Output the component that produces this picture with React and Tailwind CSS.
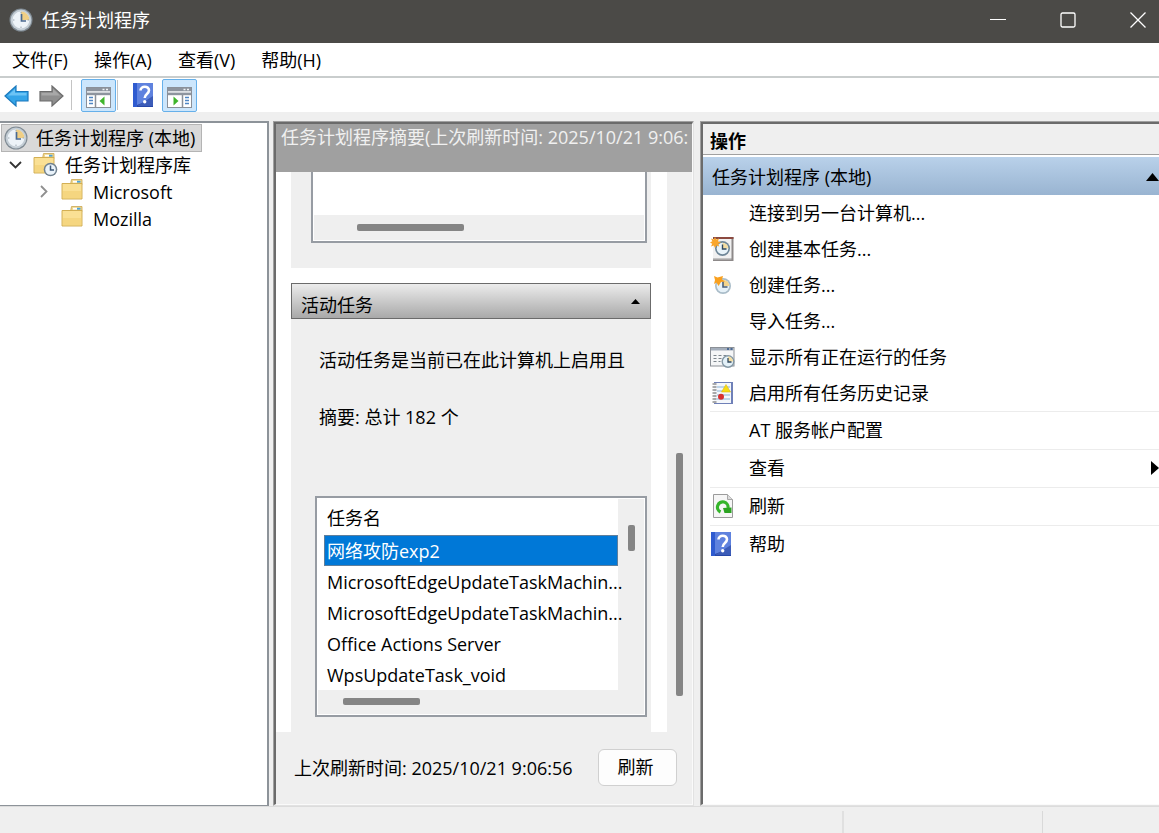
import React, { useState } from "react";

const ClockFace = ({ className }) => (
  <svg viewBox="0 0 24 24" className={className} aria-hidden="true">
    <circle cx="12" cy="12" r="11.500" fill="#7f8a93" />
    <circle cx="12" cy="12" r="10.400" fill="#c3cdd5" />
    <circle cx="12" cy="12" r="8.400" fill="#edf3f8" />
    <path d="M12 12V3.600A8.400 8.400 0 0 1 20.400 12Z" fill="#f0cf85" />
    <path
      d="M12 4v1.400M12 18.600v1.400M4 12h1.400M18.600 12h1.400"
      stroke="#9aa6b0"
      strokeWidth="1"
    />
    <path d="M12.500 6v7H17" fill="none" stroke="#4b6a90" strokeWidth="1.700" />
  </svg>
);

const FolderShape = () => (
  <>
    <path d="M2 4.500h9l1.500-3.500h8.500v19H2z" fill="#e3bd5c" />
    <path d="M10.500.5h10.500v5H9.500z" fill="#f0d88e" stroke="#c9a650" strokeWidth=".8" />
    <path d="M12 2.700h4" stroke="#fff" strokeWidth="1.800" />
    <path d="M16 2.700h3.500" stroke="#4aa3dd" strokeWidth="1.800" />
    <path d="M1 4.500h20V20H1z" fill="#fae094" stroke="#cfa94c" strokeWidth=".9" />
    <path d="M1.800 12h18.700v7.400H1.800z" fill="#f0cb6c" opacity=".5" />
  </>
);

const FolderIcon = ({ className }) => (
  <svg viewBox="0 0 22 21" className={className} aria-hidden="true">
    <FolderShape />
  </svg>
);

const FolderClockIcon = ({ className }) => (
  <svg viewBox="0 0 25 24" className={className} aria-hidden="true">
    <FolderShape />
    <circle cx="17.500" cy="16.500" r="6.800" fill="#71828f" />
    <circle cx="17.500" cy="16.500" r="5.300" fill="#eaf3fa" />
    <path d="M17.500 12.500v4.500h3.500" fill="none" stroke="#3e5a78" strokeWidth="1.500" />
  </svg>
);

const ArrowIcon = ({ back }) => (
  <svg viewBox="0 0 25 22" className="h-[22px] w-[25px]" aria-hidden="true">
    <path
      d={
        back
          ? "M1 11 12 1v5.500h12v9.500H12V21z"
          : "M24 11 13 1v5.500H1v9.500h12V21z"
      }
      fill={back ? "#35a5e8" : "#8f8f8f"}
      stroke={back ? "#1b79bd" : "#6c6c6c"}
      strokeWidth="1.200"
    />
    <path
      d={back ? "M4 10.500 11 4v4h11.500v2.500z" : "M21 10.500 14 4v4H2.500v2.500z"}
      fill={back ? "#6cc4f5" : "#a8a8a8"}
    />
  </svg>
);

const PaneIcon = ({ flip }) => (
  <svg viewBox="0 0 25 21" className="h-[21px] w-[25px]" aria-hidden="true">
    <rect x=".5" y=".5" width="24" height="20" fill="#fff" stroke="#8a9099" />
    <path d="M1 1h23v3H1z" fill="#8d949e" />
    <path d="M16.500 2.500h2M20 2.500h2" stroke="#eef1f4" strokeWidth="1.500" />
    <path d="M1 5h23" stroke="#dde0e4" strokeWidth="2" />
    <path d="M1 7h23" stroke="#8d949e" strokeWidth="2.400" />
    {flip ? (
      <>
        <path d="M15.500 8v12" stroke="#8a9099" strokeWidth="1.500" />
        <path d="M18 10.500h4M18 13.500h4M18 16.500h4" stroke="#4f86c4" strokeWidth="1.600" />
        <path d="M6.500 9.500 11.500 14l-5 4.500z" fill="#3fb52c" />
      </>
    ) : (
      <>
        <path d="M9.500 8v12" stroke="#8a9099" strokeWidth="1.500" />
        <path d="M3 10.500h4M3 13.500h4M3 16.500h4" stroke="#4f86c4" strokeWidth="1.600" />
        <path d="M18.500 9.500 13.500 14l5 4.500z" fill="#3fb52c" />
      </>
    )}
  </svg>
);

const HelpIcon = ({ className }) => (
  <svg viewBox="0 0 20 24" className={className} aria-hidden="true">
    <rect width="20" height="24" fill="#2747a8" />
    <path d="M4 0h16v16L4 22z" fill="#5f82de" />
    <path d="M0 0h4v24H0z" fill="#2f5bd0" />
    <path d="M4 23h16V13z" fill="#3c5cb8" />
    <path
      d="M7.500 7.500c0-5 8.500-5 8.500-.2 0 3.700-4.300 3.700-4.300 7.700"
      fill="none"
      stroke="#fff"
      strokeWidth="2.600"
    />
    <circle cx="11.700" cy="18.800" r="1.700" fill="#fff" />
  </svg>
);

const Spark = () => (
  <path
    d="m5 0 1.200 2.600L9 1.500 8 4.300 11 5.500 8.200 6.700 9.200 9.500 6.300 8.500 5 11 3.800 8.500 1 9.500l1.200-2.800L0 5.500l2.300-1.200L1 1.500l2.800 1z"
    fill="#f9a62c"
  />
);

const BasicTaskIcon = () => (
  <svg viewBox="0 0 24 24" className="h-6 w-6" aria-hidden="true">
    <path d="M3 0h20.500v24H3z" fill="#8d8989" />
    <path d="M3 0h20.500v2H3z" fill="#8c4a40" />
    <path d="M3 2h18.500v19H3z" fill="#f1f1f1" />
    <path d="M3 21h18.500v1.500H3z" fill="#c4c4c4" />
    <circle cx="12.500" cy="11.500" r="7.500" fill="#6f8798" />
    <circle cx="12.500" cy="11.500" r="5.800" fill="#e9f4fa" />
    <path d="M12.500 11.500V5.700a5.800 5.800 0 0 1 5.800 5.800z" fill="#f3dda2" />
    <path d="M12.500 7.500v4.500h4" fill="none" stroke="#30485e" strokeWidth="1.400" />
    <Spark />
  </svg>
);

const TaskIcon = () => (
  <svg viewBox="0 0 24 24" className="h-6 w-6" aria-hidden="true">
    <circle cx="13" cy="13" r="8" fill="#a9bcc8" />
    <circle cx="13" cy="13" r="6.300" fill="#e6f1f8" />
    <path d="M13 13V6.700a6.300 6.300 0 0 1 6.300 6.300z" fill="#f3d48c" />
    <path d="M13 8.500V14h4.500" fill="none" stroke="#4b5f78" strokeWidth="1.600" />
    <path
      d="m4 3 3.500 1.500L13 3l-1 3.500 3 2-4 .5-2.500 4-2-3.500L4 11l1-4z"
      fill="#f9a01e"
    />
  </svg>
);

const RunningIcon = () => (
  <svg viewBox="0 0 25 24" className="h-6 w-[25px]" aria-hidden="true">
    <rect x=".5" y="2.500" width="23.500" height="18.500" fill="#f5f6f7" stroke="#8b9096" />
    <path d="M1 3h22.500v2.500H1z" fill="#a4aebb" />
    <path d="M17 4h2M20.500 4h2" stroke="#2f5488" strokeWidth="1.500" />
    <path
      d="M3.500 10.500h3M8.500 10.500h3M13.500 10.500h3M3.500 13.500h3M8.500 13.500h3M3.500 16.500h3M8.500 16.500h2"
      stroke="#7d858c"
      strokeWidth="1.200"
    />
    <circle cx="18" cy="16.500" r="6.500" fill="#8397a4" />
    <circle cx="18" cy="16.500" r="5.100" fill="#e4f1f8" />
    <path d="M18 16.500v-5.100a5.100 5.100 0 0 1 5.100 5.100z" fill="#f3dda2" />
    <path d="M18 13v4h3.500" fill="none" stroke="#30485e" strokeWidth="1.300" />
  </svg>
);

const HistoryIcon = () => (
  <svg viewBox="0 0 24 24" className="h-6 w-6" aria-hidden="true">
    <path d="M4 1h19v22H4z" fill="#6f80b8" />
    <path d="M4 2h17v20H4z" fill="#f4f7fb" />
    <path d="M7 6h13M7 10h13M7 14h13M7 18h13" stroke="#86b3da" strokeWidth="1.200" />
    <path
      d="M2.500 3h4M2.500 6h4M2.500 9h4M2.500 12h4M2.500 15h4M2.500 18h4M2.500 21h4"
      stroke="#5a5a5a"
      strokeWidth="1.200"
    />
    <path d="m16 3.500 4.500 7.500h-9z" fill="#f7dc16" stroke="#dfb90f" strokeWidth=".6" />
    <circle cx="11" cy="15.800" r="3" fill="#d82f2f" />
  </svg>
);

const RefreshIcon = () => (
  <svg viewBox="0 0 24 24" className="h-6 w-6" aria-hidden="true">
    <path d="M3.500.5h14l5 5v18h-19z" fill="#f6f6f6" stroke="#9b9b9b" />
    <path d="M17.500.5v5h5" fill="#dcdcdc" stroke="#a8a8a8" />
    <path
      d="M10.500 18A5.300 5.300 0 1 1 18 14"
      fill="none"
      stroke="#35b52b"
      strokeWidth="3.200"
    />
    <path d="M13 14l8.500-.5V19H14.500z" fill="#2ca322" />
  </svg>
);

const primaryActions = [
  { label: "连接到另一台计算机..." },
  { label: "创建基本任务...", icon: <BasicTaskIcon /> },
  { label: "创建任务...", icon: <TaskIcon /> },
  { label: "导入任务..." },
  { label: "显示所有正在运行的任务", icon: <RunningIcon /> },
  { label: "启用所有任务历史记录", icon: <HistoryIcon /> },
];

const secondaryActions = [
  { label: "AT 服务帐户配置" },
  { label: "查看", submenu: true },
  { label: "刷新", icon: <RefreshIcon /> },
  { label: "帮助", icon: <HelpIcon className="ml-px h-6 w-5" /> },
];

const tasks = [
  "网络攻防exp2",
  "MicrosoftEdgeUpdateTaskMachin...",
  "MicrosoftEdgeUpdateTaskMachin...",
  "Office Actions Server",
  "WpsUpdateTask_void",
];

const TitleBar = () => (
  <header className="flex h-[43px] shrink-0 items-center bg-[#4b4a47] pb-1 pl-[9px] text-white">
    <ClockFace className="h-6 w-6" />
    <h1 className="ml-[9px] flex-1">任务计划程序</h1>
    <div className="flex gap-[38px] pr-[5px]">
      <button aria-label="最小化" className="flex h-8 w-8 items-center justify-center">
        <svg viewBox="0 0 16 16" className="h-4 w-4">
          <path d="M0 7.500h16" stroke="#fff" />
        </svg>
      </button>
      <button aria-label="最大化" className="flex h-8 w-8 items-center justify-center">
        <svg viewBox="0 0 16 16" className="h-4 w-4">
          <rect x="1" y="1" width="14" height="14" rx="1.500" fill="none" stroke="#fff" strokeWidth="1.300" />
        </svg>
      </button>
      <button aria-label="关闭" className="flex h-8 w-8 items-center justify-center">
        <svg viewBox="0 0 16 16" className="h-4 w-4">
          <path d="m.5.5 15 15m0-15-15 15" stroke="#fff" strokeWidth="1.300" />
        </svg>
      </button>
    </div>
  </header>
);

const Toolbar = () => (
  <div className="flex h-[34px] shrink-0 items-center bg-white pl-1">
    <button aria-label="后退" className="pt-[2px]">
      <ArrowIcon back />
    </button>
    <button aria-label="前进" className="ml-[10px] pt-[2px]">
      <ArrowIcon />
    </button>
    <span className="ml-[7px] h-[30px] w-px bg-[#c4c4c4]" />
    <button
      aria-label="显示/隐藏控制台树"
      className="ml-[9px] flex h-[33px] w-[35px] items-center justify-center rounded-xs border border-[#66b0ea] bg-[#cce6fc] pt-1"
    >
      <PaneIcon />
    </button>
    <span className="ml-px h-[30px] w-px bg-[#c4c4c4]" />
    <button aria-label="帮助" className="ml-[15px]">
      <HelpIcon className="h-6 w-5" />
    </button>
    <button
      aria-label="显示/隐藏操作窗格"
      className="ml-[9px] flex h-[33px] w-[35px] items-center justify-center rounded-xs border border-[#66b0ea] bg-[#cce6fc] pt-1"
    >
      <PaneIcon flip />
    </button>
  </div>
);

const ConsoleTree = () => (
  <nav className="w-[269px] shrink-0 border-t-2 border-r-2 border-b border-[#8d9399] bg-white">
    <button className="mt-px ml-px flex h-7 items-center border border-[#b4b4b4] bg-[#d9d9d9] pr-1.5 pl-[2px]">
      <ClockFace className="h-6 w-6" />
      <span className="ml-2">任务计划程序 (本地)</span>
    </button>
    <div className="flex h-[26px] items-center pl-[9px]">
      <button aria-label="折叠">
        <svg viewBox="0 0 13 8" className="h-2 w-[13px]">
          <path d="m1 1 5.500 5.500L12 1" fill="none" stroke="#333" strokeWidth="1.800" />
        </svg>
      </button>
      <button className="ml-[11px] flex items-center">
        <FolderClockIcon className="h-6 w-[25px]" />
        <span className="ml-[7px]">任务计划程序库</span>
      </button>
    </div>
    <div className="flex h-[27px] items-center pl-10">
      <button aria-label="展开" className="w-[21px]">
        <svg viewBox="0 0 8 13" className="h-[13px] w-2">
          <path d="M1 1l5.500 5.500L1 12" fill="none" stroke="#8f8f8f" strokeWidth="1.800" />
        </svg>
      </button>
      <button className="flex items-center">
        <FolderIcon className="mb-1 h-[21px] w-[22px]" />
        <span className="ml-[10px]">Microsoft</span>
      </button>
    </div>
    <button className="flex h-[27px] items-center pl-[61px]">
      <FolderIcon className="mb-1 h-[21px] w-[22px]" />
      <span className="ml-[10px]">Mozilla</span>
    </button>
  </nav>
);

const TaskTable = ({ selected, onSelect }) => (
  <div className="mr-1 ml-6 border-2 border-[#979ca3] bg-white p-px">
    <div className="flex">
      <div className="relative z-10 min-w-0 flex-1 pl-1.5">
        <table className="w-full table-fixed border-collapse text-left">
          <thead>
            <tr className="h-9">
              <th className="pt-[2px] pl-[3px] font-normal">任务名</th>
            </tr>
          </thead>
          <tbody>
            {tasks.map((task, index) => (
              <tr
                key={index}
                onClick={() => onSelect(index)}
                className={`h-[31px] ${
                  selected === index
                    ? "bg-[#0078d7] text-white outline outline-1 -outline-offset-1 outline-[#5f7f9c]"
                    : ""
                }`}
              >
                <td className="pl-[3px] whitespace-nowrap">{task}</td>
              </tr>
            ))}
          </tbody>
        </table>
      </div>
      <div className="flex w-[26px] shrink-0 justify-center bg-[#efefef] pt-[26px]">
        <span className="h-[26px] w-[7px] rounded-xs bg-[#858585]" />
      </div>
    </div>
    <div className="h-6 bg-[#efefef] pt-2 pl-[25px]">
      <div className="h-[7px] w-[77px] rounded-xs bg-[#858585]" />
    </div>
  </div>
);

const SummaryPane = () => {
  const [selected, setSelected] = useState(0);

  return (
    <main className="flex w-[421px] shrink-0 flex-col border border-t-[#a0a0a0] border-r-[#e2e2e2] border-b-[#e2e2e2] border-l-[#a0a0a0]">
      <div className="flex min-h-0 flex-1 flex-col border-2 border-r border-b border-t-[#6b6b6b] border-r-[#fafafa] border-b-[#fafafa] border-l-[#6b6b6b]">
        <h2 className="h-12 shrink-0 overflow-hidden bg-[#a0a0a0] pl-[5px] leading-[26px] whitespace-nowrap text-[#f0f0f0]">
          任务计划程序摘要(上次刷新时间: 2025/10/21 9:06:
        </h2>

        <div className="flex min-h-0 flex-1 overflow-hidden">
          <div className="flex min-w-0 flex-1 flex-col gap-[15px] bg-white pr-4 pl-[15px]">
            <section className="bg-[#efefef] pr-1 pb-[25px] pl-5">
              <div className="border-2 border-t-0 border-[#979ca3] bg-white px-px pt-[43px] pb-px">
                <div className="h-[25px] bg-[#efefef] pt-[9px] pl-[43px]">
                  <div className="h-[7px] w-[107px] rounded-xs bg-[#858585]" />
                </div>
              </div>
            </section>

            <section className="flex flex-1 flex-col bg-[#efefef]">
              <button className="flex h-9 items-center justify-between border border-[#6b6b6b] bg-linear-to-b from-[#ececec] to-[#a9a9a9] pt-2 pr-[10px] pl-[9px]">
                <span>活动任务</span>
                <svg viewBox="0 0 9 5" className="mb-2 h-[5px] w-[9px]">
                  <path d="M4.500 0 9 5H0z" />
                </svg>
              </button>
              <p className="mt-7 overflow-hidden pl-7 leading-[26px] whitespace-nowrap">
                活动任务是当前已在此计算机上启用且
              </p>
              <p className="mt-[31px] mb-[66px] pl-7 leading-[26px]">摘要: 总计 182 个</p>
              <TaskTable selected={selected} onSelect={setSelected} />
            </section>
          </div>
          <div className="w-[25px] shrink-0 pt-[281px] pl-[9px]">
            <div className="h-[243px] w-[7px] rounded-xs bg-[#858585]" />
          </div>
        </div>

        <footer className="flex h-[72px] shrink-0 items-center justify-between pr-[15px] pb-[2px] pl-[18px]">
          <span className="pt-px">上次刷新时间: 2025/10/21 9:06:56</span>
          <button className="h-[37px] w-[79px] rounded-md border border-[#d0d0d0] bg-[#fdfdfd] pr-1">
            刷新
          </button>
        </footer>
      </div>
    </main>
  );
};

const ActionItem = ({ item }) => (
  <button className="flex h-9 w-full items-center pl-[7px] text-left">
    <span className="flex w-[25px] shrink-0">{item.icon}</span>
    <span className="ml-[14px] flex-1">{item.label}</span>
    {item.submenu && (
      <svg viewBox="0 0 8 14" className="h-[14px] w-2">
        <path d="M0 0l8 7-8 7z" />
      </svg>
    )}
  </button>
);

const ActionsPane = () => (
  <aside className="flex min-w-0 flex-1 flex-col border-t border-b border-l border-t-[#a0a0a0] border-b-[#e2e2e2] border-l-[#a0a0a0]">
    <div className="flex-1 border-t-2 border-b border-l-2 border-t-[#6b6b6b] border-b-[#fafafa] border-l-[#6b6b6b] bg-white">
      <h2 className="h-[31px] border-b border-[#a0a0a0] bg-[#efefef] pl-[7px] leading-[34px] font-bold">
        操作
      </h2>
      <button className="mt-[2px] flex h-[38px] w-full items-center justify-between bg-linear-to-b from-[#b9d1ea] to-[#99b4d1] pt-px pl-[9px]">
        <span>任务计划程序 (本地)</span>
        <svg viewBox="0 0 13 8" className="h-2 w-[13px]">
          <path d="M6.500 0 13 8H0z" />
        </svg>
      </button>
      <ul>
        {primaryActions.map((item) => (
          <li key={item.label}>
            <ActionItem item={item} />
          </li>
        ))}
        {secondaryActions.map((item) => (
          <li key={item.label}>
            <div className="ml-[7px] h-px bg-[#ececec]" />
            <div className="pb-px">
              <ActionItem item={item} />
            </div>
          </li>
        ))}
      </ul>
    </div>
  </aside>
);

const App = () => {
  return (
    <div className="flex h-screen flex-col overflow-hidden bg-[#efefef] font-['Open_Sans','Noto_Sans_CJK_SC',sans-serif] text-[18px] leading-[26px] text-black">
      <TitleBar />
      <div className="flex h-[35px] shrink-0 items-center gap-[26px] border-b-2 border-[#c9cdcd] bg-white pl-3">
        <button>文件(F)</button>
        <button>操作(A)</button>
        <button>查看(V)</button>
        <button>帮助(H)</button>
      </div>
      <Toolbar />

      <div className="mt-[9px] flex min-h-0 flex-1">
        <ConsoleTree />
        <div className="ml-1 flex min-w-0 flex-1 gap-1.5">
          <SummaryPane />
          <ActionsPane />
        </div>
      </div>

      <div className="flex h-[27px] shrink-0 justify-end border-t border-[#dcdcdc] pt-1">
        <span className="w-[200px] border-l-2 border-[#e0e0e0]" />
        <span className="w-[117px] border-l border-[#d9d9d9]" />
      </div>
    </div>
  );
};

export default App;
